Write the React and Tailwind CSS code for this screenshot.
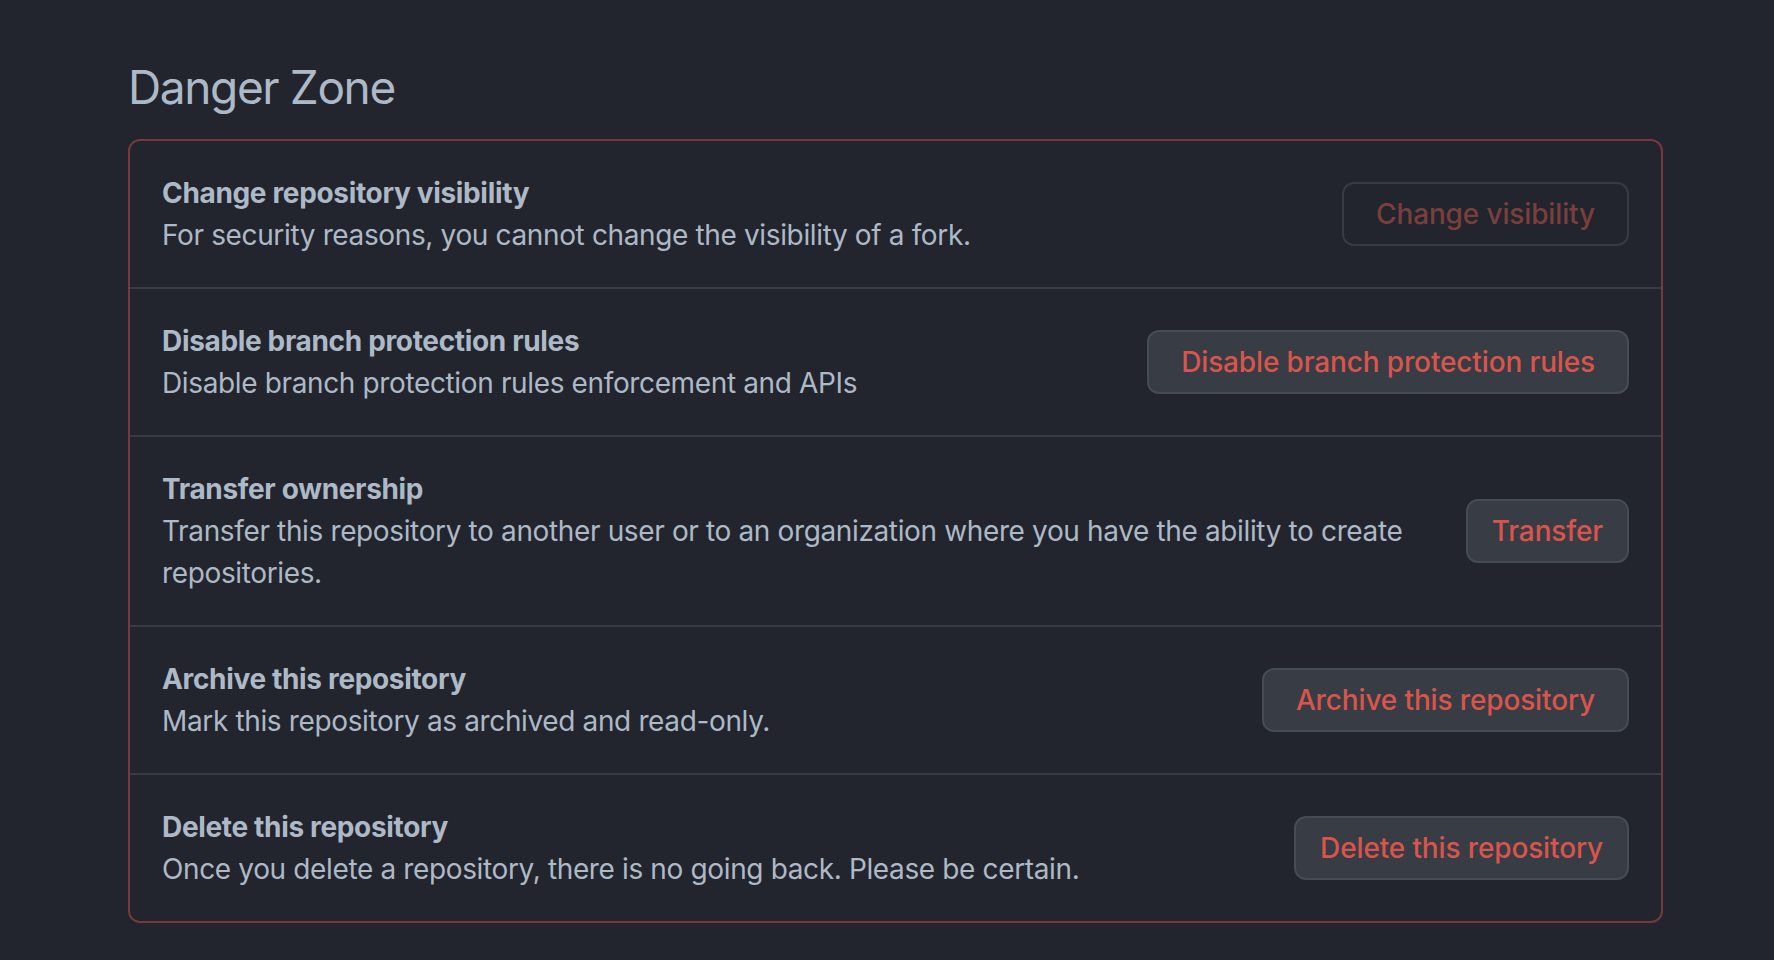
import React from 'react'

const rows = [
  {
    title: 'Change repository visibility',
    body: 'For security reasons, you cannot change the visibility of a fork.',
    action: 'Change visibility',
    disabled: true,
    wide: true,
  },
  {
    title: 'Disable branch protection rules',
    body: 'Disable branch protection rules enforcement and APIs',
    action: 'Disable branch protection rules',
    wide: true,
  },
  {
    title: 'Transfer ownership',
    body: 'Transfer this repository to another user or to an organization where you have the ability to create repositories.',
    action: 'Transfer',
  },
  {
    title: 'Archive this repository',
    body: 'Mark this repository as archived and read-only.',
    action: 'Archive this repository',
    wide: true,
  },
  {
    title: 'Delete this repository',
    body: 'Once you delete a repository, there is no going back. Please be certain.',
    action: 'Delete this repository',
  },
]

const App = () => {
  return (
    <div className="min-h-screen bg-[#22252d] pt-[57px] pb-10 font-['Inter','Liberation_Sans',sans-serif] text-[#adb9c6]">
      <div className="ml-[128px] w-[1535px]">
        {/* Heading */}
        <h2 className="text-[46px] leading-[60px] font-normal tracking-[-0.03em] mb-[22px]">Danger Zone</h2>

        {/* Danger box */}
        <div className="border-2 border-[#763a3a] rounded-[12px]">
          {rows.map((row, i) => (
            <div
              key={row.title}
              className={`flex items-center gap-6 px-8 py-[31px] ${i > 0 ? 'border-t-2 border-[#363b44]' : ''}`}
            >
              <div className="flex-auto text-[28px] leading-[42px] tracking-[-0.013em]">
                <div className="font-bold tracking-[-0.012em]">{row.title}</div>
                <p>{row.body}</p>
              </div>
              {row.disabled ? (
                <button className="shrink-0 h-16 px-8 rounded-[12px] border-2 border-[#363b44] bg-transparent text-[28px] font-medium text-[#7a3f3c] tracking-[-0.005em]">
                  {row.action}
                </button>
              ) : (
                <button
                  className={`shrink-0 h-16 ${row.wide ? 'px-8' : 'px-6'} rounded-[12px] border-2 border-[#464c55] bg-[#373c45] text-[28px] font-medium text-[#d9554c] tracking-[-0.005em]`}
                >
                  {row.action}
                </button>
              )}
            </div>
          ))}
        </div>
      </div>
    </div>
  )
}

export default App
